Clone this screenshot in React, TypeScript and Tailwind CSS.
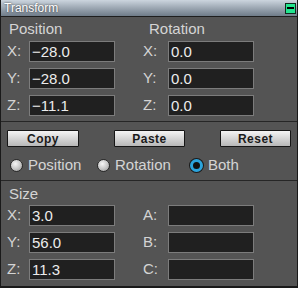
import React from 'react';

const Field: React.FC<{ value?: string }> = ({ value }) => (
  <div className="w-[86px] h-[21px] bg-[#202020] border border-[#7c7c7c] flex items-center pl-[2px] text-[15px] leading-none text-[#ececec]">
    {value}
  </div>
);

const Row: React.FC<{ a: string; av?: string; b: string; bv?: string }> = ({ a, av, b, bv }) => (
  <div className="flex items-center h-[21px]">
    <span className="w-[22px] ml-[6px] text-[15px] text-[#d4d4d4]">{a}:</span>
    <Field value={av} />
    <span className="w-[25px] ml-[28px] text-[15px] text-[#d4d4d4]">{b}:</span>
    <Field value={bv} />
  </div>
);

const Btn: React.FC<{ label: string; w: string }> = ({ label, w }) => (
  <button className={`${w} h-[17px] border border-[#161616] rounded-[1px] bg-gradient-to-b from-[#f4f4f4] to-[#b8b8b8] text-[12px] font-bold leading-none text-[#1a1a1a] tracking-[0.5px]`}>
    {label}
  </button>
);

const Radio: React.FC<{ label: string; on?: boolean; w: string }> = ({ label, on, w }) => (
  <div className={`${w} flex items-center`}>
    {on ? (
      <span className="w-[13px] h-[13px] rounded-full bg-[#111] border-[3px] border-[#2ba3dc] shadow-[0_0_0_1px_#1a1a1a]" />
    ) : (
      <span className="w-[13px] h-[13px] rounded-full border border-[#2a2a2a] bg-[radial-gradient(circle_at_40%_35%,#f6f6f6,#c4c4c4_55%,#8e8e8e)]" />
    )}
    <span className="ml-[5px] text-[15px] text-[#d4d4d4]">{label}</span>
  </div>
);

export default function App() {
  return (
    <div className="w-[298px] h-[288px] bg-[#1a1a1a] font-['Liberation_Sans',Arial,sans-serif]">
      <div className="ml-[1px] w-[296px] h-[286px] bg-[#545454] flex flex-col">
        <div className="h-[17px] border-b border-[#1e1e1e] bg-gradient-to-b from-[#ccd5de] to-[#6f7c89] flex items-center pl-[3px] pr-[1px]">
          <span className="text-[12px] leading-none text-white [text-shadow:0_0_2px_#222]">Transform</span>
          <div className="ml-auto w-[11px] h-[11px] border border-[#0d2a1c] bg-[#22e58f] flex items-center justify-center">
            <span className="w-[7px] h-[2px] bg-black" />
          </div>
        </div>

        <div className="pt-[3px] pb-[5px] border-b border-[#262626]">
          <div className="flex h-[17px] text-[15px] leading-[17px] text-[#d4d4d4]">
            <span className="w-[148px] pl-[8px]">Position</span>
            <span>Rotation</span>
          </div>
          <div className="mt-[4px] flex flex-col gap-[6px]">
            <Row a="X" av="−28.0" b="X" bv="0.0" />
            <Row a="Y" av="−28.0" b="Y" bv="0.0" />
            <Row a="Z" av="−11.1" b="Z" bv="0.0" />
          </div>
        </div>

        <div className="pt-[8px] pb-[6px] border-b border-[#262626]">
          <div className="flex justify-between px-[6px]">
            <Btn label="Copy" w="w-[72px]" />
            <Btn label="Paste" w="w-[71px]" />
            <Btn label="Reset" w="w-[71px]" />
          </div>
          <div className="mt-[10px] h-[17px] flex items-center pl-[9px]">
            <Radio label="Position" w="w-[87px]" />
            <Radio label="Rotation" w="w-[93px]" />
            <Radio label="Both" on w="w-[90px]" />
          </div>
        </div>

        <div className="pt-[4px]">
          <div className="h-[17px] pl-[8px] text-[15px] leading-[17px] text-[#d4d4d4]">Size</div>
          <div className="mt-[3px] flex flex-col gap-[6px]">
            <Row a="X" av="3.0" b="A" />
            <Row a="Y" av="56.0" b="B" />
            <Row a="Z" av="11.3" b="C" />
          </div>
        </div>
      </div>
    </div>
  );
}
